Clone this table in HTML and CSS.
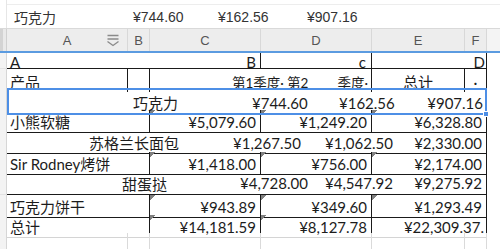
FILE: index.html
```html
<!DOCTYPE html>
<html lang="zh">
<head>
<meta charset="utf-8">
<link rel="stylesheet" href="styles.css">
</head>
<body>
<div class="app">
  <div class="fbar">
    <div class="fb-strip"></div>
    <div class="fb-content">
      <span class="fb-name">巧克力</span>
      <span class="fb-v1">¥744.60</span>
      <span class="fb-v2">¥162.56</span>
      <span class="fb-v3">¥907.16</span>
    </div>
  </div>

  <div class="colhead">
    <div class="ch corner"></div>
    <div class="ch ch-a"><span class="ch-lbl">A</span><svg class="filter" width="12" height="13" viewBox="0 0 12 13"><path d="M0.5 1.5h11M0.5 5h11M0.5 7.5l5.5 4 5.5-4" stroke="#8a8a8a" stroke-width="1.3" fill="none"/></svg></div>
    <div class="ch">B</div>
    <div class="ch">C</div>
    <div class="ch">D</div>
    <div class="ch">E</div>
    <div class="ch">F</div>
    <div class="ch rest"></div>
  </div>

  <div class="row r1">
    <div class="rh"></div>
    <div class="c ab bl bb">A</div>
    <div class="c rt br bb pr4">B</div>
    <div class="c rt br bb pr5">c</div>
    <div class="c bb"></div>
    <div class="c rt br bb pr1">D</div>
    <div class="c"></div>
  </div>

  <div class="row r2">
    <div class="rh"></div>
    <div class="c br pl3">产品</div>
    <div class="c br"></div>
    <div class="c pl82 q">第1季度·</div>
    <div class="c br pl26 q2 q"><span>第2</span><span class="q2b">季度·</span></div>
    <div class="c br ctr">总计</div>
    <div class="c br ctr">·</div>
    <div class="c"></div>
  </div>

  <div class="row r3">
    <div class="rh"></div>
    <div class="sel">
      <div class="c pl124">巧克力</div>
      <div class="c pl102">¥744.60</div>
      <div class="c pl78">¥162.56</div>
      <div class="c rt pr2">¥907.16</div>
      <span class="handle"></span>
    </div>
    <div class="c"></div>
  </div>

  <div class="row r4 std">
    <div class="rh"></div>
    <div class="c ab br bb pl3">小熊软糖</div>
    <div class="c rt br bb pr4 tri">¥5,079.60</div>
    <div class="c rt br bb pr4 tri">¥1,249.20</div>
    <div class="c ef rt br bb pr4 tri">¥6,328.80</div>
    <div class="c"></div>
  </div>

  <div class="row r5 std">
    <div class="rh"></div>
    <div class="c ab bb pl82">苏格兰长面包</div>
    <div class="c bb pl83">¥1,267.50</div>
    <div class="c bb pl64">¥1,062.50</div>
    <div class="c ef rt br bb pr4">¥2,330.00</div>
    <div class="c"></div>
  </div>

  <div class="row r6 std">
    <div class="rh"></div>
    <div class="c ab br bb pl3">Sir Rodney烤饼</div>
    <div class="c rt br bb pr4 tri">¥1,418.00</div>
    <div class="c rt br bb pr4 tri">¥756.00</div>
    <div class="c ef rt br bb pr4 tri">¥2,174.00</div>
    <div class="c"></div>
  </div>

  <div class="row r7 std">
    <div class="rh"></div>
    <div class="c ab bb pl115">甜蛋挞</div>
    <div class="c bb pl90">¥4,728.00</div>
    <div class="c bb pl64">¥4,547.92</div>
    <div class="c ef rt br bb pr4">¥9,275.92</div>
    <div class="c"></div>
  </div>

  <div class="row r8 std">
    <div class="rh"></div>
    <div class="c ab br bb pl3">巧克力饼干</div>
    <div class="c rt br bb pr4 tri">¥943.89</div>
    <div class="c rt br bb pr4 tri">¥349.60</div>
    <div class="c ef rt br bb pr4 tri">¥1,293.49</div>
    <div class="c"></div>
  </div>

  <div class="row r9 std">
    <div class="rh"></div>
    <div class="c ab br bbl pl3">总计</div>
    <div class="c rt br bbl pr4 tri">¥14,181.59</div>
    <div class="c rt br bbl pr4 tri">¥8,127.78</div>
    <div class="c ef rt br bbl pr2">¥22,309.37.</div>
    <div class="c"></div>
  </div>

  <div class="row r10">
    <div class="rh"></div>
    <div class="c gl"></div>
    <div class="c gl"></div>
    <div class="c gl"></div>
    <div class="c gl"></div>
    <div class="c gl"></div>
    <div class="c gl"></div>
    <div class="c"></div>
  </div>
</div>
</body>
</html>
```

FILE: styles.css
```css
* { box-sizing: border-box; }
html, body { margin: 0; padding: 0; background: #fff; }
.app {
  width: 500px;
  height: 249px;
  overflow: hidden;
  background: #fff;
  font-family: "Lato", "Noto Sans CJK SC", sans-serif;
  font-size: 15px;
  color: #1c1c1c;
}

/* formula bar */
.fbar {
  display: flex;
  height: 29px;
  border-bottom: 1px solid #d9d9d9;
}
.fb-strip {
  width: 7px;
  border-right: 1px solid #e6e6e6;
}
.fb-content {
  flex: 1;
  margin-top: 4px;
  border-top: 1px solid #ededed;
  display: flex;
  align-items: center;
  padding-left: 7px;
  font-family: "Liberation Sans", "Noto Sans CJK SC", sans-serif;
  font-size: 14px;
  color: #333;
  white-space: nowrap;
}
.fb-name { width: 119px; }
.fb-v1 { width: 85px; }
.fb-v2 { width: 89px; }

/* column headers */
.colhead {
  display: grid;
  grid-template-columns: 7px 121px 22px 111px 111px 93px 22px 13px;
  height: 24px;
  background: #ededed;
  border-bottom: 2px solid #5b9be0;
}
.ch {
  display: flex;
  align-items: center;
  justify-content: center;
  border-right: 1px solid #d8d8d8;
  font-family: "Liberation Sans", sans-serif;
  font-size: 13px;
  color: #555;
}
.corner {
  background: linear-gradient(to right, #d3d3d3 3px, #e9e9e9 3px);
  border-right: 1px solid #d0d0d0;
}
.ch-a {
  display: grid;
  grid-template-columns: 1fr;
  align-items: center;
}
.ch-a > * { grid-area: 1 / 1; }
.ch-lbl { justify-self: center; }
.filter { justify-self: end; margin-right: 8px; margin-top: 1px; }
.rest { background: #f4f4f4; border-right: none; }

/* rows */
.row {
  display: grid;
  grid-template-columns: 7px 121px 22px 111px 111px 93px 22px 13px;
}
.std { grid-template-columns: 7px 143px 111px 111px 115px 13px; }
.rh {
  background: #f3f3f3;
  border-right: 1px solid #d6d6d6;
  border-bottom: 1px solid #e2e2e2;
}
.c {
  display: flex;
  align-items: center;
  white-space: nowrap;
  overflow: visible;
  min-width: 0;
}
.r1 .ab { grid-column: span 2; }
.br { border-right: 1px solid #1a1a1a; }
.bb { border-bottom: 1px solid #1a1a1a; }
.bbl { border-bottom: 1px solid #d4d4d4; }
.bl { padding-left: 3px; }
.rt { justify-content: flex-end; }
.ctr { justify-content: center; }
.pl3 { padding-left: 3px; }
.pl26 { padding-left: 26px; }
.pl64 { padding-left: 64px; }
.pl78 { padding-left: 78px; }
.pl82 { padding-left: 82px; }
.pl83 { padding-left: 83px; }
.pl90 { padding-left: 90px; }
.pl102 { padding-left: 102px; }
.pl115 { padding-left: 115px; }
.pl124 { padding-left: 124px; }
.pr1 { padding-right: 1px; }
.pr2 { padding-right: 2px; }
.pr4 { padding-right: 4px; }
.pr5 { padding-right: 5px; }

.q { font-size: 13.5px; }
.q2 { padding-right: 3px; }
.q2b { margin-left: auto; }

.tri {
  background: linear-gradient(135deg, #808080 0, #808080 3.6px, transparent 3.6px) no-repeat 0 0 / 6px 6px;
}

.r1 { height: 16px; }
.r1 .c { align-items: flex-end; line-height: 12px; }
.r2 { height: 19px; }
.r2 .c { padding-top: 2px; }
.r3 { height: 22px; grid-template-columns: 7px 480px 13px; }
.sel {
  position: relative;
  display: grid;
  grid-template-columns: 141px 111px 111px 113px;
  border: 2px solid #4d8fe6;
}
.sel .c { padding-top: 2px; }
.handle {
  position: absolute;
  right: -4px;
  bottom: -4px;
  width: 6px;
  height: 6px;
  background: #4d8fe6;
  border: 1px solid #fff;
}
.r4 { height: 22px; }
.r4 .c, .r6 .c, .r8 .c, .r9 .c { padding-top: 1px; }
.r5 { height: 20px; }
.r6 { height: 20px; }
.r7 { height: 23px; }
.r8 { height: 20px; }
.r9 { height: 18px; }
.r10 { height: 20px; }
.gl { border-right: 1px solid #dadada; }
```
